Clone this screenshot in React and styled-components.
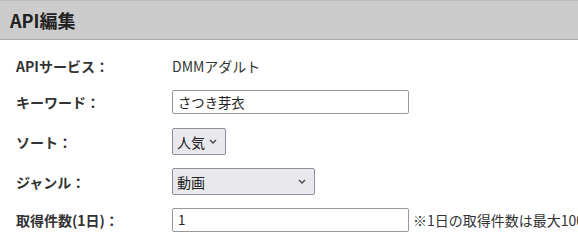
import React, { useState } from 'react';
import styled, { createGlobalStyle } from 'styled-components';

const GlobalStyle = createGlobalStyle`
html,body{
  margin:0;
  padding:0;
  background:#fff;
  overflow:hidden;
}
body{
  font-family:"Noto Sans CJK JP","Noto Sans",sans-serif;
  color:#333;
}
`;

const chevron = `url("data:image/svg+xml;utf8,<svg xmlns='http://www.w3.org/2000/svg' width='8' height='5' viewBox='0 0 8 5'><path d='M1 1 L4 4 L7 1' fill='none' stroke='%23444' stroke-width='1.3'/></svg>")`;

const Page = styled.div`
width:578px;
overflow:hidden;
`;

const Header = styled.div`
height:38px;
background:#cccccc;
border-top:1px solid #bdbdbd;
border-bottom:1px solid #a9a9a9;
display:flex;
align-items:center;
padding-left:10px;
`;

const Title = styled.h2`
margin:0;
font-size:18px;
font-weight:700;
color:#222;
`;

const Form = styled.div`
display:flex;
flex-direction:column;
padding:16px 0 0 16px;
`;

const Row = styled.div`
display:flex;
align-items:center;
min-height:${p => p.h || 20}px;
margin-top:${p => p.top || 0}px;
white-space:nowrap;
`;

const Label = styled.div`
width:156px;
flex-shrink:0;
font-size:14px;
font-weight:700;
color:#333;
`;

const Value = styled.div`
font-size:14px;
color:#333;
`;

const TextInput = styled.input`
box-sizing:border-box;
flex-shrink:0;
width:237px;
height:24px;
border:1px solid #999;
border-radius:2px;
padding:0 5px;
font-family:"Noto Sans CJK JP","Noto Sans",sans-serif;
font-size:13.33px;
color:#222;
`;

const Select = styled.select`
box-sizing:border-box;
flex-shrink:0;
appearance:none;
-webkit-appearance:none;
width:${p => p.w}px;
height:27px;
border:1px solid #8f8f9d;
border-radius:2px;
background:#e9e9ed ${chevron} no-repeat right 8px center;
font-family:"Noto Sans CJK JP","Noto Sans",sans-serif;
font-size:14px;
color:#222;
padding:0 4px;
`;

const Note = styled.span`
margin-left:4px;
font-size:14px;
color:#333;
`;

export default function App() {
  const [keyword, setKeyword] = useState('さつき芽衣');
  const [count, setCount] = useState('1');
  return (
    <Page>
      <GlobalStyle />
      <Header>
        <Title>API編集</Title>
      </Header>
      <Form>
        <Row h={20}>
          <Label>APIサービス：</Label>
          <Value>DMMアダルト</Value>
        </Row>
        <Row h={24} top={14}>
          <Label>キーワード：</Label>
          <TextInput value={keyword} onChange={e => setKeyword(e.target.value)} />
        </Row>
        <Row h={27} top={14}>
          <Label>ソート：</Label>
          <Select w={54} defaultValue="人気">
            <option>人気</option>
            <option>新着</option>
          </Select>
        </Row>
        <Row h={27} top={13}>
          <Label>ジャンル：</Label>
          <Select w={143} defaultValue="動画">
            <option>動画</option>
          </Select>
        </Row>
        <Row h={25} top={12}>
          <Label>取得件数(1日)：</Label>
          <TextInput value={count} onChange={e => setCount(e.target.value)} />
          <Note>※1日の取得件数は最大100件です</Note>
        </Row>
      </Form>
    </Page>
  );
}
